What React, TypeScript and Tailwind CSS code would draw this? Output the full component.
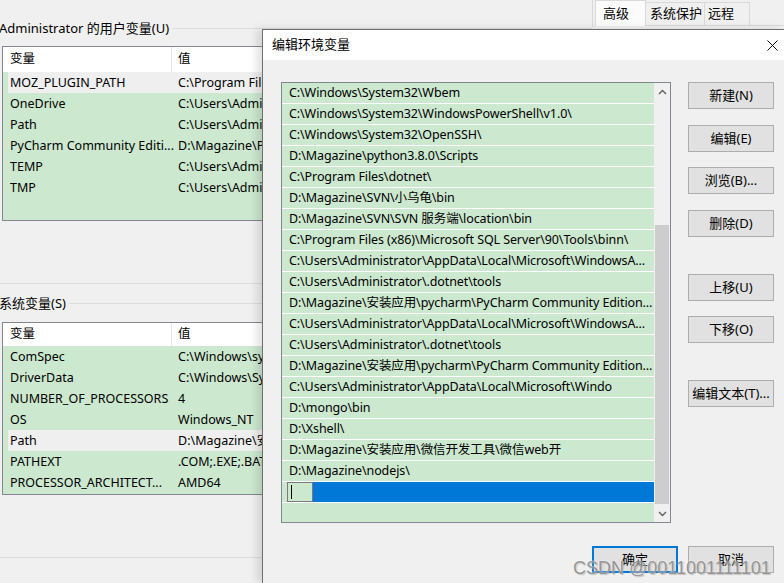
import React from "react";

const FONT = "font-['Noto_Sans','Noto_Sans_CJK_SC',sans-serif]";

type VarRow = { name: string; value: string; hot?: boolean };

const USER_VARS: VarRow[] = [
  { name: "MOZ_PLUGIN_PATH", value: "C:\\Program Files (x86)\\Foxit Software\\plugins\\", hot: true },
  { name: "OneDrive", value: "C:\\Users\\Administrator\\OneDrive" },
  { name: "Path", value: "C:\\Users\\Administrator\\AppData\\Local\\Microsoft" },
  { name: "PyCharm Community Editi...", value: "D:\\Magazine\\PyCharm\\bin" },
  { name: "TEMP", value: "C:\\Users\\Administrator\\AppData\\Local\\Temp" },
  { name: "TMP", value: "C:\\Users\\Administrator\\AppData\\Local\\Temp" },
];

const SYSTEM_VARS: VarRow[] = [
  { name: "ComSpec", value: "C:\\Windows\\system32\\cmd.exe" },
  { name: "DriverData", value: "C:\\Windows\\System32\\Drivers\\DriverData" },
  { name: "NUMBER_OF_PROCESSORS", value: "4" },
  { name: "OS", value: "Windows_NT" },
  { name: "Path", value: "D:\\Magazine\\安装应用\\python", hot: true },
  { name: "PATHEXT", value: ".COM;.EXE;.BAT;.CMD;.VBS" },
  { name: "PROCESSOR_ARCHITECT...", value: "AMD64" },
];

const PATHS = [
  "C:\\Windows\\System32\\Wbem",
  "C:\\Windows\\System32\\WindowsPowerShell\\v1.0\\",
  "C:\\Windows\\System32\\OpenSSH\\",
  "D:\\Magazine\\python3.8.0\\Scripts",
  "C:\\Program Files\\dotnet\\",
  "D:\\Magazine\\SVN\\小乌龟\\bin",
  "D:\\Magazine\\SVN\\SVN 服务端\\location\\bin",
  "C:\\Program Files (x86)\\Microsoft SQL Server\\90\\Tools\\binn\\",
  "C:\\Users\\Administrator\\AppData\\Local\\Microsoft\\WindowsA...",
  "C:\\Users\\Administrator\\.dotnet\\tools",
  "D:\\Magazine\\安装应用\\pycharm\\PyCharm Community Edition...",
  "C:\\Users\\Administrator\\AppData\\Local\\Microsoft\\WindowsA...",
  "C:\\Users\\Administrator\\.dotnet\\tools",
  "D:\\Magazine\\安装应用\\pycharm\\PyCharm Community Edition...",
  "C:\\Users\\Administrator\\AppData\\Local\\Microsoft\\Windo",
  "D:\\mongo\\bin",
  "D:\\Xshell\\",
  "D:\\Magazine\\安装应用\\微信开发工具\\微信web开",
  "D:\\Magazine\\nodejs\\",
];

function GroupLabel({ text }: { text: string }) {
  return (
    <div className="flex h-[14px] items-center">
      <span className="-ml-px whitespace-nowrap text-[13px] leading-none text-black">{text}</span>
      <div className="ml-[3px] h-px flex-1 bg-[#dcdcdc]" />
    </div>
  );
}

function VarList({ rows, headerH, height }: { rows: VarRow[]; headerH: string; height: string }) {
  return (
    <div className={`ml-[2px] w-[578px] ${height} overflow-hidden border border-[#828790] bg-[#cce8cf]`}>
      <div className={`flex ${headerH} items-center bg-white text-[12.5px]`}>
        <div className="flex h-full w-[169px] items-center border-r border-[#e5e5e5] pl-[7px]">变量</div>
        <div className="pl-[6px]">值</div>
      </div>
      {rows.map((r, i) => (
        <div key={i} className="flex h-[21px] text-[12.5px]">
          <div className={`ml-[5px] flex flex-1 items-center whitespace-nowrap pt-px ${r.hot ? "bg-[#efefef]" : ""}`}>
            <div className="w-[166px] pl-[2px]">{r.name}</div>
            <div className="pl-[4px]">{r.value}</div>
          </div>
        </div>
      ))}
    </div>
  );
}

function Chevron({ up }: { up?: boolean }) {
  return (
    <svg width="9" height="6" viewBox="0 0 9 6">
      <path
        d={up ? "M1 5 L4.5 1.5 L8 5" : "M1 1 L4.5 4.5 L8 1"}
        fill="none"
        stroke="#606060"
        strokeWidth="1.4"
      />
    </svg>
  );
}

function Btn({ label, className = "" }: { label: string; className?: string }) {
  return (
    <div
      className={`flex h-[27px] w-[86px] items-center justify-center border border-[#adadad] bg-[#e1e1e1] text-[13px] text-black ${className}`}
    >
      {label}
    </div>
  );
}

export default function App() {
  return (
    <div className={`relative h-[583px] w-[784px] overflow-hidden bg-[#f0f0f0] text-black ${FONT}`}>
      {/* window behind */}
      <div className="flex">
        <div className="flex w-[592px] flex-col">
          <div className="h-[21px]" />
          <GroupLabel text="Administrator 的用户变量(U)" />
          <div className="h-[11px]" />
          <VarList rows={USER_VARS} headerH="h-[25px]" height="h-[175px]" />
          <div className="mt-[62px] h-px bg-[#dcdcdc]" />
          <div className="h-[12px]" />
          <GroupLabel text="系统变量(S)" />
          <div className="h-[12px]" />
          <VarList rows={SYSTEM_VARS} headerH="h-[23px]" height="h-[173px]" />
          <div className="mt-[62px] h-px bg-[#dcdcdc]" />
        </div>
        <div className="flex h-[27px] flex-1 border-l border-[#d9d9d9] pl-[2px]">
          <div className="flex h-[26px] w-[51px] items-center border-x border-t border-[#d9d9d9] bg-[#fbfbfb] pl-[7px] text-[13px]">
            高级
          </div>
          <div className="mt-[2px] flex h-[24px] w-[59px] items-center border-t border-r border-b border-[#d9d9d9] pl-[4px] text-[13px]">
            系统保护
          </div>
          <div className="mt-[2px] flex h-[24px] w-[45px] items-center border-t border-r border-b border-[#d9d9d9] pl-[3px] text-[13px]">
            远程
          </div>
          <div className="h-[26px] flex-1 border-b border-[#d9d9d9]" />
        </div>
      </div>

      {/* dialog */}
      <div className="absolute bottom-0 left-[262px] right-0 top-[29px] flex flex-col border-l border-t border-[#6f6f6f] bg-[#f0f0f0] shadow-[-5px_0_8px_rgba(0,0,0,0.12)]">
        <div className="flex h-[30px] items-center justify-between bg-white pl-[9px] pr-[6px]">
          <span className="text-[13px]">编辑环境变量</span>
          <svg width="11" height="11" viewBox="0 0 11 11">
            <path d="M0.5 0.5 L10.5 10.5 M10.5 0.5 L0.5 10.5" stroke="#111" strokeWidth="1" />
          </svg>
        </div>

        <div className="flex pl-[18px] pt-[22px]">
          <div className="flex h-[441px] w-[390px] shrink-0 overflow-hidden border border-[#828790] bg-[#cce8cf]">
            <div className="flex min-w-0 flex-1 flex-col">
              {PATHS.map((p, i) => (
                <div
                  key={i}
                  className="flex h-[21px] shrink-0 items-center overflow-hidden whitespace-nowrap border-b border-white pl-[7px] pt-px text-[12.5px] tracking-[-0.1px]"
                >
                  {p}
                </div>
              ))}
              <div className="flex h-[21px] shrink-0 items-stretch border-b border-white pl-[5px]">
                <div className="flex w-[26px] items-center border border-[#7a7a7a] bg-[#cce8cf] pl-[3px]">
                  <div className="h-[14px] w-px bg-black" />
                </div>
                <div className="flex-1 bg-[#0078d7]" />
              </div>
            </div>
            <div className="flex w-[16px] shrink-0 flex-col bg-[#f0f0f0]">
              <div className="flex h-[17px] items-center justify-center">
                <Chevron up />
              </div>
              <div className="h-[125px]" />
              <div className="mx-px h-[279px] bg-[#cdcdcd]" />
              <div className="flex-1" />
              <div className="flex h-[17px] items-center justify-center">
                <Chevron />
              </div>
            </div>
          </div>

          <div className="ml-[17px] flex flex-col">
            <Btn label="新建(N)" />
            <Btn label="编辑(E)" className="mt-[16px]" />
            <Btn label="浏览(B)..." className="mt-[15px]" />
            <Btn label="删除(D)" className="mt-[16px]" />
            <Btn label="上移(U)" className="mt-[37px]" />
            <Btn label="下移(O)" className="mt-[15px]" />
            <Btn label="编辑文本(T)..." className="mt-[37px]" />
          </div>
        </div>

        <div className="mt-[23px] flex justify-end gap-[10px] pr-[10px]">
          <div className="flex h-[27px] w-[86px] items-center justify-center border-2 border-[#0078d7] bg-[#e1e1e1] text-[13px]">
            确定
          </div>
          <Btn label="取消" />
        </div>
      </div>

      {/* watermark */}
      <div className="absolute left-[573px] top-[555px] whitespace-nowrap font-['Liberation_Sans',sans-serif] text-[18px] text-[#8a8a8a]/90 [text-shadow:0_0_2px_#fff,1px_1px_1px_rgba(0,0,0,0.25)]">
        CSDN @0011001111101
      </div>
    </div>
  );
}
